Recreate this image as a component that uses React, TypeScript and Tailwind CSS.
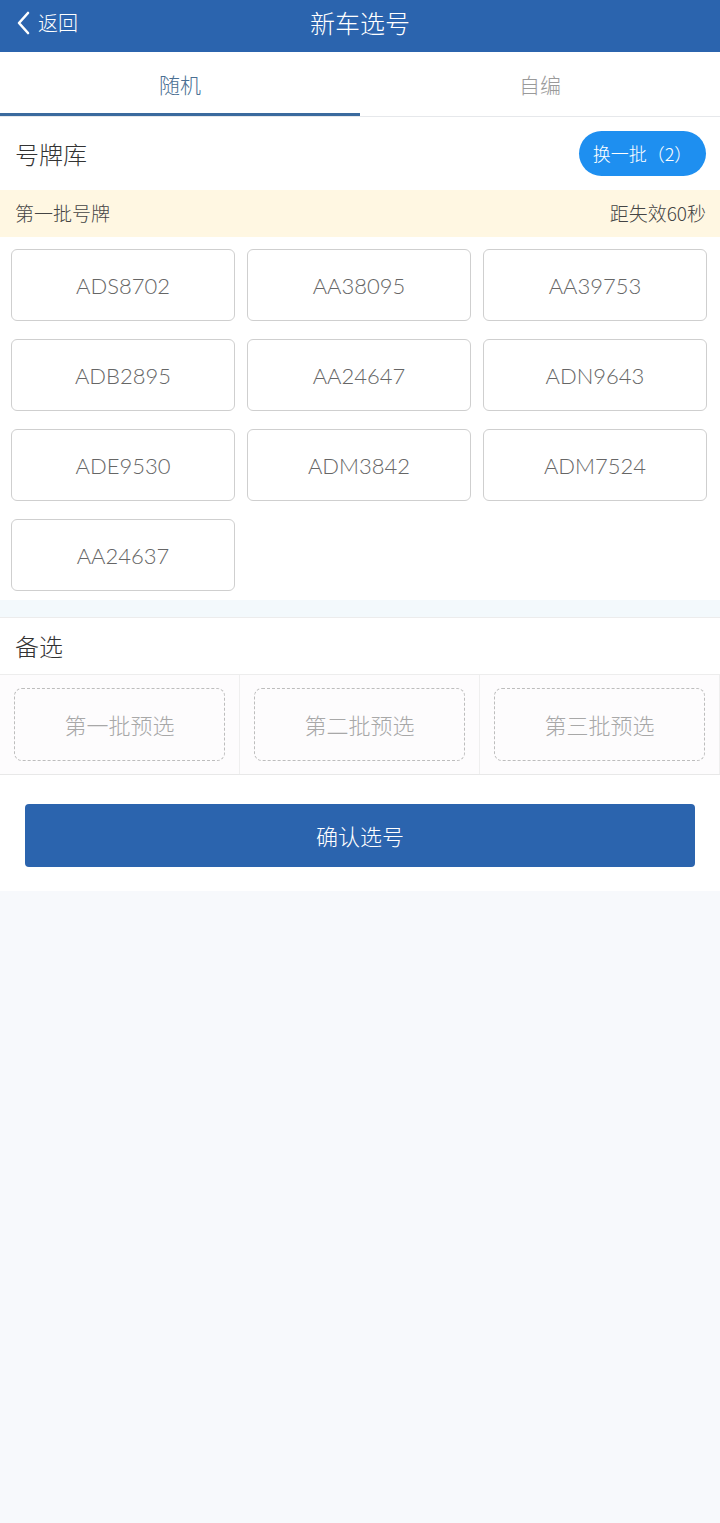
import React from "react";

const plates = [
  "ADS8702", "AA38095", "AA39753",
  "ADB2895", "AA24647", "ADN9643",
  "ADE9530", "ADM3842", "ADM7524",
  "AA24637",
];

const cjk = { fontFamily: '"Noto Sans CJK SC", "Noto Sans", sans-serif' };
const latin = { fontFamily: 'Lato, "Noto Sans CJK SC", sans-serif' };

export default function App() {
  return (
    <div className="min-h-[1523px] w-[720px] bg-[#f7f9fc]" style={cjk}>
      {/* Header */}
      <div className="relative flex h-[52px] items-center justify-center bg-[#2b64ae]">
        <div className="absolute left-[14px] top-0 flex h-[46px] items-center gap-[4px] text-white">
          <svg width="20" height="26" viewBox="0 0 20 26" fill="none">
            <path d="M14 3 L5 13 L14 23" stroke="white" strokeWidth="2.6" strokeLinecap="round" strokeLinejoin="round" />
          </svg>
          <span className="text-[20px] font-light leading-none">返回</span>
        </div>
        <span className="mb-[6px] text-[25px] font-light text-white">新车选号</span>
      </div>

      {/* Tabs */}
      <div className="flex h-[65px] border-b border-[#e6e8eb] bg-white">
        <div className="flex flex-1 flex-col">
          <div className="flex flex-1 items-center justify-center pt-[4px] text-[21px] font-light text-[#4a6f93]">随机</div>
          <div className="h-[3px] bg-[#3a6a9e]" />
        </div>
        <div className="flex flex-1 flex-col">
          <div className="flex flex-1 items-center justify-center pt-[4px] text-[21px] font-light text-[#9a9a9a]">自编</div>
          <div className="h-[3px]" />
        </div>
      </div>

      {/* 号牌库 */}
      <div className="flex h-[73px] items-center justify-between bg-white pl-[15px] pr-[14px]">
        <span className="text-[24px] font-light text-[#333]">号牌库</span>
        <div className="flex h-[45px] w-[127px] items-center justify-center rounded-full bg-[#1e8ff0] text-[18px] font-light text-white">
          换一批（2）
        </div>
      </div>

      {/* Yellow band */}
      <div className="flex h-[47px] items-center justify-between bg-[#fff7e2] pl-[15px] pr-[14px] text-[19px] font-light text-[#444]">
        <span>第一批号牌</span>
        <span>距失效60秒</span>
      </div>

      {/* Plates grid */}
      <div className="grid grid-cols-3 gap-x-[12px] gap-y-[18px] bg-white pb-[9px] pl-[11px] pr-[13px] pt-[12px]">
        {plates.map((p) => (
          <div
            key={p}
            className="flex h-[72px] items-center justify-center rounded-[6px] border border-[#cfcfcf] bg-white text-[22px] font-light text-[#666]"
            style={latin}
          >
            {p}
          </div>
        ))}
      </div>

      {/* Strip */}
      <div className="h-[18px] border-b border-[#ececec] bg-[#f3f9fc]" />

      {/* 备选 */}
      <div className="flex h-[57px] items-center border-b border-[#ededed] bg-white pl-[15px]">
        <span className="text-[24px] font-light text-[#333]">备选</span>
      </div>

      <div className="grid grid-cols-3 border-b border-[#e8e8e8] bg-[#fdfcfd]">
        {["第一批预选", "第二批预选", "第三批预选"].map((t) => (
          <div key={t} className="border-r border-[#efefef] px-[14px] py-[13px]">
            <div className="flex h-[73px] items-center justify-center rounded-[8px] border-[1.5px] border-dashed border-[#bdbdbd] text-[22px] font-light text-[#a8a8a8]">
              {t}
            </div>
          </div>
        ))}
      </div>

      {/* Confirm */}
      <div className="bg-white px-[25px] pb-[24px] pt-[29px]">
        <div className="flex h-[63px] items-center justify-center rounded-[4px] bg-[#2b64ae] text-[22px] font-light text-white">
          确认选号
        </div>
      </div>
    </div>
  );
}
